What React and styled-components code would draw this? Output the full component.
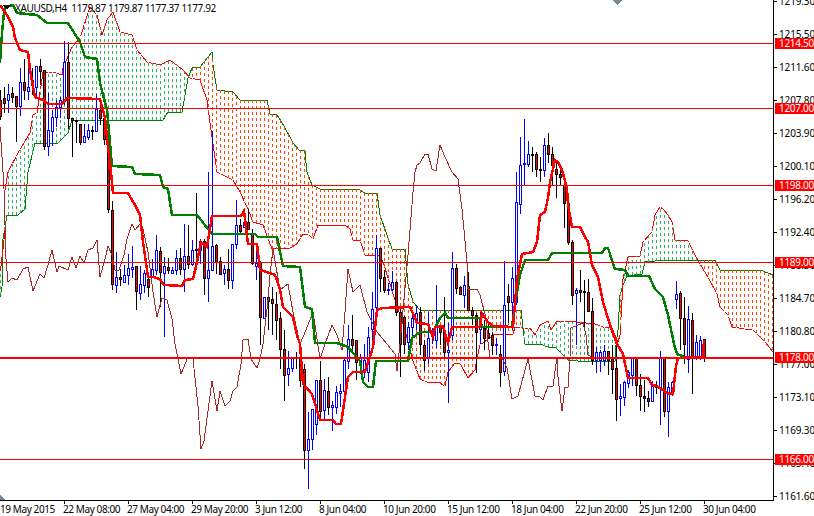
import React from 'react';
import styled, { createGlobalStyle } from 'styled-components';

const GlobalStyle = createGlobalStyle`
  html, body { margin: 0; padding: 0; background: #fff; overflow: hidden; }
  #root { width: 814px; height: 516px; }
`;

const uiFont = `"Noto Sans", "Liberation Sans", sans-serif`;

const Terminal = styled.div`
  position: relative;
  display: grid;
  grid-template-columns: 773px 41px;
  grid-template-rows: 500px 16px;
  width: 814px;
  height: 516px;
  overflow: hidden;
  background: #fff;
  color: #000;
  font: 10px/11px ${uiFont};
`;

const Plot = styled.svg`
  display: block;
  width: 773px;
  height: 500px;
  shape-rendering: crispEdges;
`;

const Legend = styled.div`
  position: absolute;
  left: 15px;
  top: 2px;
  white-space: pre;
  line-height: 12px;
  letter-spacing: -0.36px;
`;

const PriceAxis = styled.div`
  position: relative;
  display: flex;
  flex-direction: column;
  border-left: 1px solid #000;
  height: 500px;
  box-sizing: border-box;
  letter-spacing: -0.15px;
`;

const PriceRow = styled.div`
  position: relative;
  flex: 0 0 33px;
  height: 33px;
  margin-top: ${p => (p.$first ? '-15px' : '0')};
  display: flex;
  align-items: center;
  padding-left: 5px;
  box-sizing: border-box;
  &::before {
    content: '';
    position: absolute;
    left: 0;
    top: 16px;
    width: 3px;
    height: 1px;
    background: #000;
  }
`;

const PriceTag = styled.div`
  position: absolute;
  left: 775px;
  top: ${p => p.$top}px;
  width: 39px;
  height: 11px;
  background: #ff0000;
  color: #fff;
  padding-left: 4px;
  box-sizing: border-box;
  line-height: 11px;
  letter-spacing: -0.3px;
  white-space: nowrap;
`;

const TimeAxis = styled.div`
  display: flex;
  grid-column: 1 / 3;
  width: 774px;
  height: 16px;
  border-top: 1px solid #000;
  box-sizing: border-box;
  padding-top: 3px;
  letter-spacing: -0.4px;
`;

const TimeLabel = styled.div`
  position: relative;
  flex: 0 0 ${p => (p.$first ? '63px' : '64px')};
  white-space: nowrap;
  &::before {
    content: '';
    display: ${p => (p.$first ? 'none' : 'block')};
    position: absolute;
    left: 1px;
    top: -3px;
    width: 1px;
    height: 3px;
    background: #000;
  }
`;

const C = { blue: '#0000ff', black: '#000', red: '#ff0000', green: '#008000', brown: '#a52a2a', hatchG: '#2fb065', hatchO: '#ff4500', gray: '#778899' };

// [type, high, bodyTop, bodyBottom, low] in plot pixels; one bar every 4px
const bars = [
  ['d',90,100,116,120],['d',87,98,103,113],['u',84,94,100,113],['d',87,93,97,103],['d',96,96,106,142],
  ['u',68,82,106,116],['d',59,82,90,100],['u',68,87,91,100],['d',68,80,85,95],['u',66,66,87,98],
  ['d',59,66,71,85],['d',70,70,146,150],['u',93,130,146,156],['u',110,117,131,146],['u',100,107,117,127],
  ['u',97,100,107,118],['u',41,62,100,105],['d',42,62,118,129],['d',118,118,120,157],['d',120,120,121,143],
  ['d',124,124,142,145],['u',124,136,142,143],['u',124,130,137,140],['d',126,130,131,140],['u',94,109,131,132],
  ['d',100,110,118,125],['d',118,118,139,145],['d',133,133,209,213],['d',201,210,284,290],['u',252,277,285,293],
  ['d',269,277,279,286],['u',265,275,282,283],['u',254,268,275,285],['u',246,267,269,278],['d',266,266,291,310],
  ['u',266,284,293,300],['u',270,273,285,293],['d',272,279,287,297],['u',259,269,277,278],['u',235,250,270,275],
  ['d',247,251,272,307],['u',257,266,273,337],['d',258,267,270,274],['u',267,270,273,274],['u',250,258,270,275],
  ['d',248,258,269,275],['u',224,256,269,292],['d',225,256,264,269],['u',240,250,264,266],['d',193,249,250,264],
  ['u',239,241,250,264],['d',239,241,278,295],['u',172,270,278,302],['u',131,246,270,270],['d',244,245,262,274],
  ['d',257,261,274,274],['u',265,269,273,285],['d',249,269,280,289],['u',244,244,280,289],['u',200,225,244,249],
  ['d',219,225,231,234],['u',209,222,227,228],['d',209,222,229,230],['d',229,234,263,265],['u',243,263,266,280],
  ['d',261,262,317,345],['u',297,297,318,319],['d',287,297,301,330],['d',287,299,303,335],['d',292,304,320,340],
  ['d',312,318,349,369],['d',330,349,375,401],['u',351,368,374,386],['u',357,357,368,372],['d',352,357,358,369],
  ['d',351,358,380,387],['d',364,369,450,469],['u',412,439,450,489],['u',409,409,439,450],['u',380,380,424,435],
  ['d',361,380,411,420],['u',379,390,410,419],['d',377,391,407,415],['u',401,405,407,431],['u',386,392,407,414],
  ['u',384,391,393,407],['u',359,360,391,396],['u',325,339,361,369],['d',315,339,345,352],['d',340,340,362,380],
  ['u',354,358,365,374],['u',344,360,371,378],['u',327,337,372,382],['u',292,309,329,351],['u',235,248,307,311],
  ['d',250,248,278,292],['d',270,277,290,293],['u',283,289,290,295],['u',271,282,289,291],['d',281,282,312,316],
  ['d',307,312,344,377],['d',316,317,344,354],['u',322,327,342,350],['u',311,318,327,336],['u',305,313,320,330],
  ['d',307,312,344,355],['d',340,345,360,371],['u',312,338,358,364],['u',328,332,336,344],['u',285,327,340,348],
  ['d',325,325,332,345],['d',297,332,352,358],['u',323,350,352,403],['u',252,268,335,340],['d',264,268,288,294],
  ['d',286,287,294,295],['u',276,285,295,308],['d',272,286,310,311],['d',307,310,315,325],['d',313,315,332,373],
  ['u',312,324,329,344],['d',320,328,338,350],['d',324,333,337,339],['d',332,335,345,355],['u',338,344,345,355],
  ['d',345,354,372,387],['u',261,305,371,376],['d',284,296,302,323],['u',267,278,302,330],['u',172,202,302,305],
  ['u',137,165,204,214],['u',119,163,164,185],['u',141,154,164,167],['d',147,154,155,172],['d',152,154,169,177],
  ['d',157,169,170,182],['u',138,145,170,177],['d',133,145,154,163],['d',147,154,165,185],['d',162,169,174,198],
  ['d',166,174,177,185],['d',177,185,203,228],['d',200,203,242,245],['d',240,242,295,305],['u',288,290,293,345],
  ['d',270,290,292,302],['d',280,291,292,330],['d',279,292,311,311],['d',298,311,360,365],['u',347,352,360,373],
  ['u',350,352,360,372],['u',345,351,360,366],['d',351,351,360,375],['d',345,359,369,394],['d',346,368,399,421],
  ['u',384,396,398,416],['u',381,382,397,406],['u',370,372,383,388],['u',357,357,375,386],['d',357,358,385,396],
  ['d',374,385,396,411],['d',380,396,398,412],['d',391,398,401,407],['u',381,386,401,402],['d',381,385,387,394],
  ['u',351,357,387,425],['d',357,357,411,417],['u',382,387,411,437],['u',381,382,394,396],['u',281,294,299,309],
  ['d',291,293,318,350],['d',297,318,344,364],['u',306,319,359,373],['d',313,320,358,394],['u',335,342,357,360],
  ['u',336,340,357,360],['d',339,339,357,362],
];

const tenkan = [[0,5],[7,15],[13,27],[15,38],[20,50],[28,52],[30,70],[35,97],[43,100],[48,104],[62,104],[67,98],[100,99],[105,118],[108,147],[111,172],[113,193],[128,193],[135,205],[140,215],[143,242],[148,277],[153,277],[160,279],[164,285],[182,286],[185,280],[193,279],[197,262],[201,242],[207,247],[212,216],[241,216],[244,211],[248,244],[257,244],[260,270],[270,273],[275,275],[280,289],[283,307],[293,317],[297,335],[300,344],[303,384],[312,394],[320,420],[333,420],[336,424],[341,424],[348,377],[353,372],[365,372],[373,347],[377,310],[382,308],[410,307],[415,318],[417,323],[428,324],[433,337],[435,327],[443,326],[448,343],[452,327],[480,327],[482,313],[488,322],[493,326],[513,327],[517,279],[522,254],[533,252],[537,242],[540,215],[545,212],[548,198],[550,182],[555,160],[558,162],[562,170],[567,188],[568,205],[572,227],[580,227],[585,237],[588,242],[592,265],[598,277],[603,302],[610,325],[617,344],[623,354],[628,378],[648,378],[652,385],[657,386],[667,393],[673,394],[676,366],[678,358],[703,357],[704,340]];

const kijun = [[0,63],[2,33],[4,13],[5,7],[13,5],[17,13],[37,15],[47,23],[68,23],[80,42],[85,57],[97,59],[100,83],[107,110],[110,143],[112,166],[132,167],[135,174],[160,175],[163,187],[168,189],[172,215],[197,215],[212,234],[255,234],[258,237],[277,237],[283,266],[300,267],[305,307],[312,309],[315,343],[337,343],[348,347],[360,361],[363,382],[368,387],[373,387],[376,361],[408,361],[412,338],[420,332],[433,332],[440,318],[445,313],[448,318],[480,318],[482,327],[512,327],[515,305],[520,275],[525,260],[548,260],[552,253],[602,253],[605,248],[608,248],[615,269],[625,270],[628,276],[649,276],[655,289],[663,297],[668,315],[674,344],[677,354],[687,358],[705,358]];

const spanA = [[0,275],[4,240],[5,190],[8,172],[18,153],[30,133],[33,115],[37,113],[43,72],[53,72],[62,75],[63,68],[72,47],[80,38],[90,7],[97,15],[102,35],[107,20],[113,12],[120,32],[132,35],[137,50],[147,62],[160,65],[170,60],[182,69],[190,78],[200,80],[207,100],[210,123],[217,172],[233,180],[240,192],[248,209],[253,222],[263,225],[272,249],[290,248],[297,244],[303,234],[308,234],[313,239],[318,225],[345,225],[350,229],[353,240],[360,240],[365,255],[380,255],[383,262],[395,300],[405,330],[413,361],[420,379],[427,382],[438,382],[445,386],[448,372],[455,363],[460,363],[468,378],[475,370],[477,358],[480,345],[495,334],[513,334],[515,327],[522,328],[530,328],[535,335],[540,325],[548,321],[551,330],[557,321],[577,322],[595,324],[603,327],[612,328],[618,342],[620,335],[622,300],[623,279],[628,257],[640,256],[643,242],[652,232],[655,215],[660,207],[663,209],[668,215],[672,222],[675,240],[688,241],[695,255],[703,269],[708,277],[717,294],[720,307],[728,315],[732,327],[745,329],[753,330],[760,337],[765,342],[773,352]];

const spanB = [[0,297],[2,287],[3,239],[7,215],[18,215],[25,209],[28,172],[35,143],[58,143],[68,133],[72,120],[163,120],[168,112],[182,112],[188,78],[192,68],[200,67],[212,52],[213,65],[217,90],[233,92],[240,100],[267,100],[270,114],[277,115],[281,121],[285,128],[290,137],[293,143],[299,150],[305,151],[306,163],[307,172],[312,185],[320,189],[358,189],[365,193],[377,193],[380,215],[387,235],[392,249],[405,249],[408,284],[413,302],[420,310],[521,310],[523,328],[525,344],[540,344],[548,347],[555,347],[568,360],[578,361],[615,361],[616,345],[618,330],[620,295],[623,285],[627,276],[642,274],[645,262],[665,260],[715,260],[720,270],[760,270],[773,275]];

const chikou = [[0,127],[3,172],[4,189],[6,259],[8,282],[12,278],[17,280],[23,269],[28,267],[33,291],[40,274],[44,278],[48,265],[52,250],[57,272],[59,266],[68,270],[72,257],[76,268],[80,256],[84,263],[88,250],[93,248],[97,240],[100,277],[106,255],[108,246],[112,255],[115,270],[119,270],[124,255],[127,239],[132,224],[135,230],[140,224],[143,229],[148,252],[153,292],[157,317],[162,298],[167,300],[172,319],[175,344],[181,374],[188,357],[193,359],[198,406],[201,449],[204,441],[208,411],[212,381],[217,411],[220,391],[225,406],[230,401],[233,391],[237,387],[241,364],[243,340],[248,339],[251,359],[257,368],[260,359],[263,344],[268,300],[270,275],[273,249],[280,290],[288,284],[293,312],[300,344],[306,330],[313,312],[320,359],[325,344],[332,325],[337,335],[342,350],[345,312],[348,269],[353,292],[360,285],[367,312],[377,332],[387,344],[395,354],[397,371],[400,344],[408,255],[413,192],[415,172],[417,165],[420,163],[425,154],[428,154],[432,169],[436,171],[440,145],[445,157],[452,172],[458,179],[462,209],[467,262],[468,289],[477,289],[480,295],[486,318],[488,342],[490,358],[502,358],[507,368],[512,399],[518,396],[528,359],[535,396],[540,397],[543,400],[548,386],[553,386],[557,357],[558,377],[562,411],[565,387],[568,387],[570,357],[571,328],[583,323],[586,335],[588,355],[593,358],[600,358]];

const levels = [
  { y: 43, label: '1214.50' },
  { y: 108, label: '1207.00' },
  { y: 185, label: '1198.00' },
  { y: 262, label: '1189.00' },
  { y: 357, label: '1178.00', bold: true },
  { y: 459, label: '1166.00' },
];

const priceScale = ['1219.30','1215.50','1211.60','1207.80','1203.90','1200.10','1196.20','1192.40','1188.50','1184.70','1180.80','1177.00','1173.10','1169.30','1165.40','1161.60'];
const timeScale = ['19 May 2015','22 May 08:00','27 May 04:00','29 May 20:00','3 Jun 12:00','8 Jun 04:00','10 Jun 20:00','15 Jun 12:00','18 Jun 04:00','22 Jun 20:00','25 Jun 12:00','30 Jun 04:00'];

const pts = line => line.map(([x, y]) => `${x},${y}`).join(' ');

const sample = (line, x) => {
  for (let i = 1; i < line.length; i++) {
    const [x0, y0] = line[i - 1];
    const [x1, y1] = line[i];
    if (x <= x1) return y0 + ((y1 - y0) * (x - x0)) / (x1 - x0 || 1);
  }
  return line[line.length - 1][1];
};

// Cloud hatch: opaque columns, 3px dots every 6px, measured from span B towards span A
const hatch = { g: '', o: '', blank: '' };
for (let k = 0; k * 4 < 773; k++) {
  const x = k * 4 + 0.5;
  const a = Math.round(sample(spanA, x));
  const b = Math.round(sample(spanB, x));
  const dir = a < b ? -1 : 1;
  const key = a < b ? 'g' : 'o';
  hatch.blank += `M${x} ${b}V${a}`;
  for (let y = b; dir * (a - y) > 0; y += dir * 6) {
    const end = dir > 0 ? Math.min(y + 3, a) : Math.max(y - 3, a);
    hatch[key] += `M${x} ${y}V${end}`;
  }
}

const Candle = ({ bar: [type, high, top, bottom, low], k }) => {
  const x = k * 4;
  const edge = type === 'u' ? C.blue : C.black;
  const fill = type === 'u' ? '#fff' : C.red;
  return (
    <g>
      <rect x={x} y={high} width={1} height={low - high} fill={edge} />
      <rect x={x - 1} y={top} width={3} height={Math.max(bottom - top, 1) + 1} fill={edge} />
      {bottom - top > 1 && <rect x={x} y={top + 1} width={1} height={bottom - top - 1} fill={fill} />}
    </g>
  );
};

const Chart = () => (
  <Plot viewBox="0 0 773 500">
    <polyline points={pts(spanB)} stroke={C.green} strokeWidth="1" fill="none" />
    <polyline points={pts(spanA)} stroke={C.red} strokeWidth="1" fill="none" />
    <path d={hatch.blank} stroke="#fff" strokeWidth="1" fill="none" />
    <path d={hatch.g} stroke={C.hatchG} strokeWidth="1" fill="none" />
    <path d={hatch.o} stroke={C.hatchO} strokeWidth="1" fill="none" />
    {bars.map((bar, k) => <Candle key={k} bar={bar} k={k} />)}
    <polyline points={pts(chikou)} stroke={C.brown} strokeWidth="1" fill="none" />
    <polyline points={pts(kijun)} stroke={C.green} strokeWidth="2.5" fill="none" />
    <polyline points={pts(tenkan)} stroke={C.red} strokeWidth="2.5" fill="none" />
    <rect x="0" y="358" width="773" height="1" fill={C.gray} />
    {levels.map(l => (
      <rect key={l.y} x="0" y={l.y} width="773" height={l.bold ? 2 : 1} fill={C.red} />
    ))}
    <polygon points="3,5 11,5 7,10" fill="#111" />
    <polygon points="612,0 622,0 617,5" fill={C.gray} />
    <polygon points="0,495 5,500 0,500" fill={C.gray} />
  </Plot>
);

export default function App() {
  return (
    <>
      <GlobalStyle />
      <Terminal>
        <Chart />
        <Legend>{'XAUUSD,H4  1179.87 1179.87 1177.37 1177.92'}</Legend>
        <PriceAxis>
          {priceScale.map((p, i) => <PriceRow key={p} $first={i === 0}>{p}</PriceRow>)}
        </PriceAxis>
        <TimeAxis>
          {timeScale.map((t, i) => <TimeLabel key={t} $first={i === 0}>{t}</TimeLabel>)}
        </TimeAxis>
        {levels.map(l => <PriceTag key={l.y} $top={l.y - 5}>{l.label}</PriceTag>)}
      </Terminal>
    </>
  );
}
